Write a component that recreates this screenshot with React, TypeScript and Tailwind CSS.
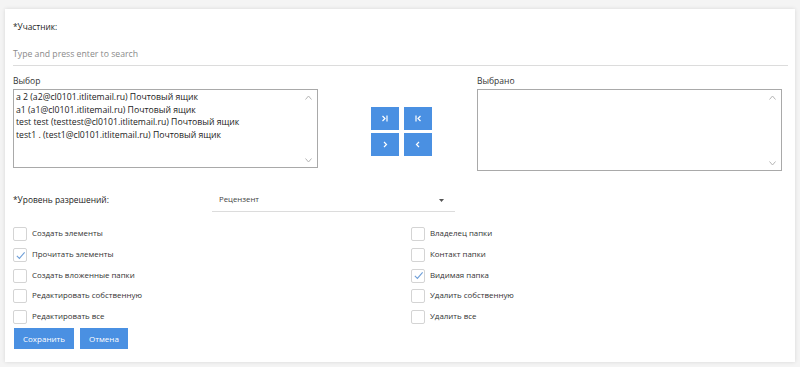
import React from "react";

const font = { fontFamily: '"Open Sans", "Noto Sans", sans-serif' };

function Box({ checked }: { checked?: boolean }) {
  return (
    <span className="w-[14px] h-[14px] border border-[#d4d4d4] rounded-[2px] bg-white flex items-center justify-center shrink-0">
      {checked && (
        <svg width="11" height="11" viewBox="0 0 12 12">
          <path d="M2 6.5 L4.8 9.2 L10.5 2.5" fill="none" stroke="#6f9fd8" strokeWidth="1.2" />
        </svg>
      )}
    </span>
  );
}

function Check({ label, checked }: { label: string; checked?: boolean }) {
  return (
    <div className="flex items-center gap-[5px] h-[20.7px]">
      <Box checked={checked} />
      <span className="text-[7.9px] text-[#333]">{label}</span>
    </div>
  );
}

function ListBox({ items, h }: { items: string[]; h: string }) {
  return (
    <div className={`relative border border-[#a9a9a9] bg-white ${h}`}>
      <div className="pl-[2px] pt-[1px] text-[8.7px] leading-[12.5px] text-[#222]">
        {items.map((t) => (
          <div key={t} className="whitespace-nowrap">{t}</div>
        ))}
      </div>
      <svg className="absolute right-[5px] top-[5px]" width="7" height="5" viewBox="0 0 7 5">
        <path d="M0.5 4.5 L3.5 1 L6.5 4.5" fill="none" stroke="#b5b5b5" strokeWidth="1" />
      </svg>
      <svg className="absolute right-[5px] bottom-[4px]" width="7" height="5" viewBox="0 0 7 5">
        <path d="M0.5 0.5 L3.5 4 L6.5 0.5" fill="none" stroke="#b5b5b5" strokeWidth="1" />
      </svg>
    </div>
  );
}

function Btn({ children }: { children: React.ReactNode }) {
  return (
    <div className="w-[28px] h-[23px] bg-[#4a90e2] text-white flex items-center justify-center">
      {children}
    </div>
  );
}

export default function App() {
  return (
    <div className="w-[800px] h-[367px] bg-[#f4f4f4] pt-[9px] px-[5px]" style={font}>
      <div className="bg-white h-[353px] shadow-[0_0_4px_rgba(0,0,0,0.12)] pl-[8px] pr-[7px] pt-[11px]">
        <div className="text-[8.3px] leading-[14px] text-[#222]">*Участник:</div>
        <div className="mt-[13px] border-b border-[#dcdcdc] h-[19px] text-[8.7px] leading-[14px] text-[#8a8a8a]">
          Type and press enter to search
        </div>
        <div className="flex mt-[9px]">
          <div className="w-[305px]">
            <div className="text-[8.5px] leading-[12px] text-[#333] mb-[2px]">Выбор</div>
            <ListBox
              h="h-[79px]"
              items={[
                "a 2 (a2@cl0101.itlitemail.ru) Почтовый ящик",
                "a1 (a1@cl0101.itlitemail.ru) Почтовый ящик",
                "test test (testtest@cl0101.itlitemail.ru) Почтовый ящик",
                "test1 . (test1@cl0101.itlitemail.ru) Почтовый ящик",
              ]}
            />
          </div>
          <div className="ml-[53px] mt-[32px] grid grid-cols-2 gap-x-[5px] gap-y-[3px] h-fit">
            <Btn>
              <svg width="8" height="7" viewBox="0 0 8 7"><path d="M1.5 1 L4 3.5 L1.5 6 M6 0.5 V6.5" fill="none" stroke="white" strokeWidth="1.2" /></svg>
            </Btn>
            <Btn>
              <svg width="8" height="7" viewBox="0 0 8 7"><path d="M2 0.5 V6.5 M6.5 1 L4 3.5 L6.5 6" fill="none" stroke="white" strokeWidth="1.2" /></svg>
            </Btn>
            <Btn>
              <svg width="6" height="7" viewBox="0 0 6 7"><path d="M2 1 L4.5 3.5 L2 6" fill="none" stroke="white" strokeWidth="1.2" /></svg>
            </Btn>
            <Btn>
              <svg width="6" height="7" viewBox="0 0 6 7"><path d="M4 1 L1.5 3.5 L4 6" fill="none" stroke="white" strokeWidth="1.2" /></svg>
            </Btn>
          </div>
          <div className="w-[305px] ml-[45px]">
            <div className="text-[8.5px] leading-[12px] text-[#333] mb-[2px]">Выбрано</div>
            <ListBox h="h-[82px]" items={[]} />
          </div>
        </div>
        <div className="flex items-end mt-[20px]">
          <div className="w-[199px] text-[8.4px] leading-[14px] text-[#222] pb-[5px]">*Уровень разрешений:</div>
          <div className="w-[243px] border-b border-[#dcdcdc] h-[21px] flex items-center justify-between pl-[7px] pr-[11px] pb-[2px]">
            <span className="text-[7.8px] text-[#444]">Рецензент</span>
            <svg width="5" height="3" viewBox="0 0 5 3"><path d="M0 0 H5 L2.5 3 Z" fill="#555" /></svg>
          </div>
        </div>
        <div className="flex mt-[12px]">
          <div className="w-[398px]">
            <Check label="Создать элементы" />
            <Check label="Прочитать элементы" checked />
            <Check label="Создать вложенные папки" />
            <Check label="Редактировать собственную" />
            <Check label="Редактировать все" />
          </div>
          <div>
            <Check label="Владелец папки" />
            <Check label="Контакт папки" />
            <Check label="Видимая папка" checked />
            <Check label="Удалить собственную" />
            <Check label="Удалить все" />
          </div>
        </div>
        <div className="flex gap-[6px] mt-[1px] ml-[1px]">
          <div className="h-[21px] px-[9px] bg-[#4a90e2] text-white text-[8px] flex items-center">Сохранить</div>
          <div className="h-[21px] px-[9px] bg-[#4a90e2] text-white text-[8px] flex items-center">Отмена</div>
        </div>
      </div>
    </div>
  );
}
